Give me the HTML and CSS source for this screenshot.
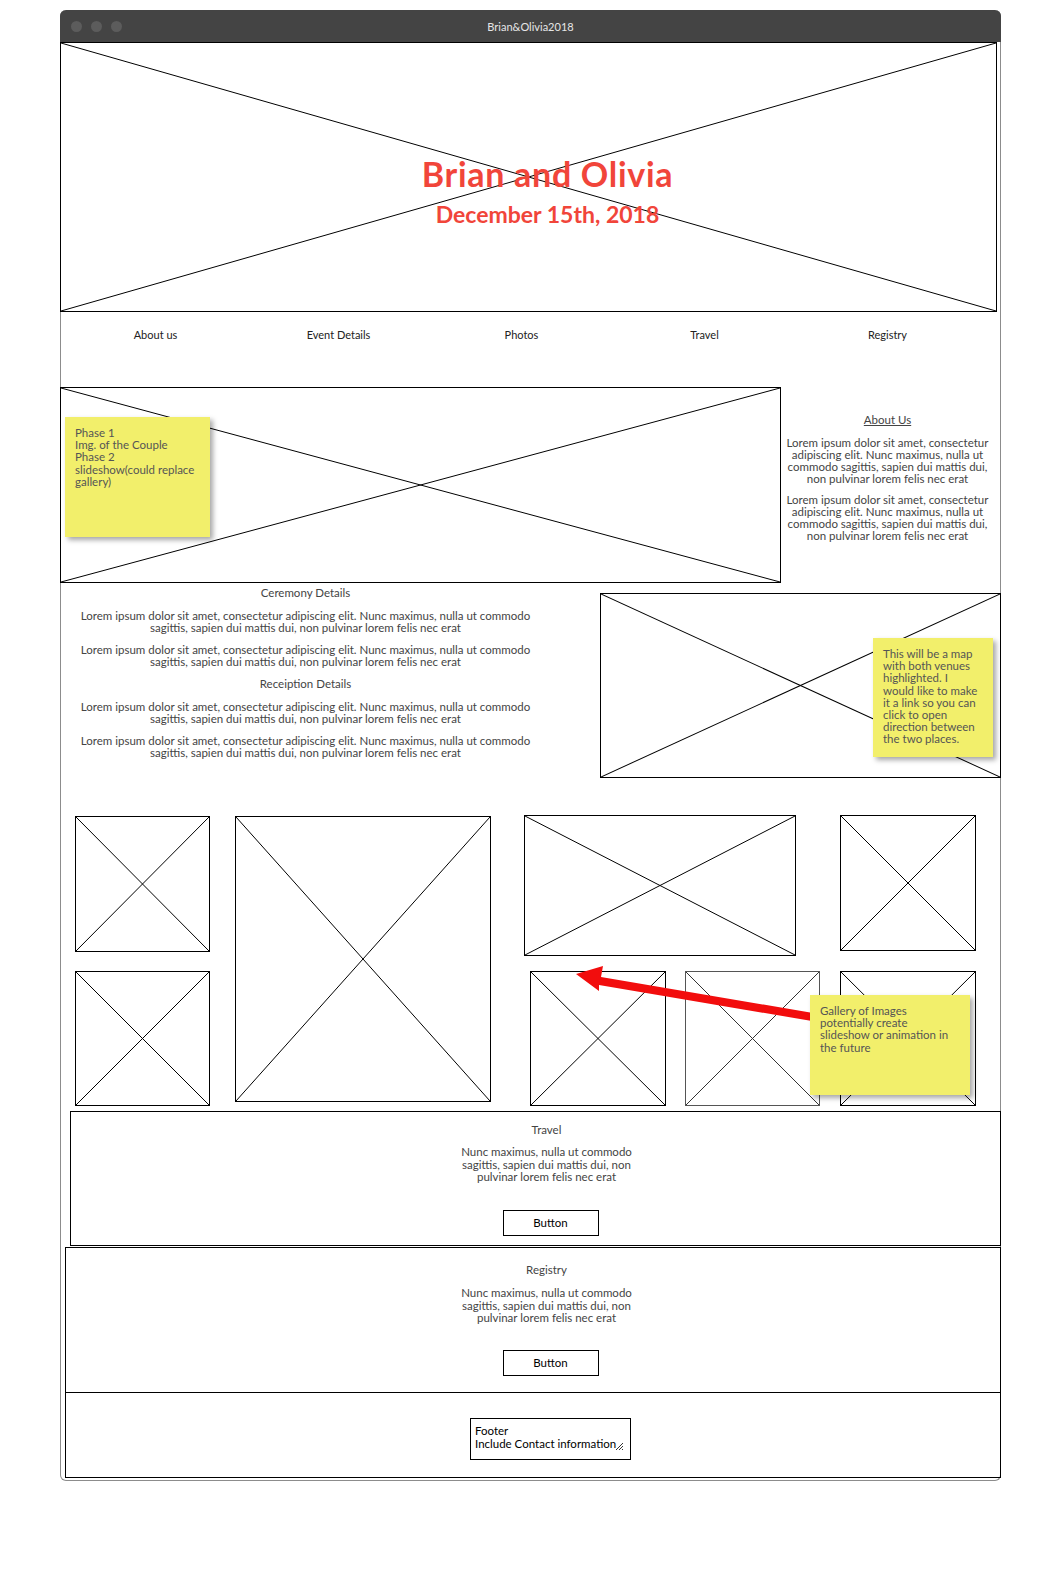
FILE: index.html
```html
<!DOCTYPE html>
<html lang="en">
<head>
    <meta charset="UTF-8">
    <title>Brian&amp;Olivia2018</title>
    <link rel="stylesheet" href="styles.css">
</head>
<body>
    <div class="window">
        <div class="titlebar">
            <div class="dots"><span></span><span></span><span></span></div>
            <div class="title">Brian&amp;Olivia2018</div>
            <div></div>
        </div>

        <div class="page">
            <header class="hero ph">
                <svg class="x" viewBox="0 0 100 100" preserveAspectRatio="none"><line x1="0" y1="0" x2="100" y2="100"/><line x1="0" y1="100" x2="100" y2="0"/></svg>
                <h1>Brian and Olivia</h1>
                <p class="date">December 15th, 2018</p>
            </header>

            <nav class="nav">
                <a>About us</a>
                <a>Event Details</a>
                <a>Photos</a>
                <a>Travel</a>
                <a>Registry</a>
            </nav>

            <section class="about">
                <div class="ph couple">
                    <svg class="x" viewBox="0 0 100 100" preserveAspectRatio="none"><line x1="0" y1="0" x2="100" y2="100"/><line x1="0" y1="100" x2="100" y2="0"/></svg>
                    <div class="note note-couple">Phase 1<br>Img. of the Couple<br>Phase 2<br>slideshow(could replace<br>gallery)</div>
                </div>
                <div class="about-text">
                    <h2 class="underline">About Us</h2>
                    <p>Lorem ipsum dolor sit amet, consectetur adipiscing elit. Nunc maximus, nulla ut commodo sagittis, sapien dui mattis dui, non pulvinar lorem felis nec erat</p>
                    <p>Lorem ipsum dolor sit amet, consectetur adipiscing elit. Nunc maximus, nulla ut commodo sagittis, sapien dui mattis dui, non pulvinar lorem felis nec erat</p>
                </div>
            </section>

            <section class="event">
                <div class="event-text">
                    <h2>Ceremony Details</h2>
                    <p>Lorem ipsum dolor sit amet, consectetur adipiscing elit. Nunc maximus, nulla ut commodo sagittis, sapien dui mattis dui, non pulvinar lorem felis nec erat</p>
                    <p>Lorem ipsum dolor sit amet, consectetur adipiscing elit. Nunc maximus, nulla ut commodo sagittis, sapien dui mattis dui, non pulvinar lorem felis nec erat</p>
                    <h2>Receiption Details</h2>
                    <p>Lorem ipsum dolor sit amet, consectetur adipiscing elit. Nunc maximus, nulla ut commodo sagittis, sapien dui mattis dui, non pulvinar lorem felis nec erat</p>
                    <p>Lorem ipsum dolor sit amet, consectetur adipiscing elit. Nunc maximus, nulla ut commodo sagittis, sapien dui mattis dui, non pulvinar lorem felis nec erat</p>
                </div>
                <div class="ph map">
                    <svg class="x" viewBox="0 0 100 100" preserveAspectRatio="none"><line x1="0" y1="0" x2="100" y2="100"/><line x1="0" y1="100" x2="100" y2="0"/></svg>
                    <div class="note note-map">This will be a map<br>with both venues<br>highlighted. I<br>would like to make<br>it a link so you can<br>click to open<br>direction between<br>the two places.</div>
                </div>
            </section>

            <section class="gallery">
                <div class="col col-a">
                    <div class="ph img1"><svg class="x" viewBox="0 0 100 100" preserveAspectRatio="none"><line x1="0" y1="0" x2="100" y2="100"/><line x1="0" y1="100" x2="100" y2="0"/></svg></div>
                    <div class="ph img5"><svg class="x" viewBox="0 0 100 100" preserveAspectRatio="none"><line x1="0" y1="0" x2="100" y2="100"/><line x1="0" y1="100" x2="100" y2="0"/></svg></div>
                </div>
                <div class="col col-b">
                    <div class="ph img2"><svg class="x" viewBox="0 0 100 100" preserveAspectRatio="none"><line x1="0" y1="0" x2="100" y2="100"/><line x1="0" y1="100" x2="100" y2="0"/></svg></div>
                </div>
                <div class="col col-c">
                    <div class="ph img3"><svg class="x" viewBox="0 0 100 100" preserveAspectRatio="none"><line x1="0" y1="0" x2="100" y2="100"/><line x1="0" y1="100" x2="100" y2="0"/></svg></div>
                    <div class="pair">
                        <div class="ph img6"><svg class="x" viewBox="0 0 100 100" preserveAspectRatio="none"><line x1="0" y1="0" x2="100" y2="100"/><line x1="0" y1="100" x2="100" y2="0"/></svg></div>
                        <div class="ph img7 faint"><svg class="x" viewBox="0 0 100 100" preserveAspectRatio="none"><line x1="0" y1="0" x2="100" y2="100"/><line x1="0" y1="100" x2="100" y2="0"/></svg></div>
                    </div>
                </div>
                <div class="col col-d">
                    <div class="ph img4"><svg class="x" viewBox="0 0 100 100" preserveAspectRatio="none"><line x1="0" y1="0" x2="100" y2="100"/><line x1="0" y1="100" x2="100" y2="0"/></svg></div>
                    <div class="ph img8"><svg class="x" viewBox="0 0 100 100" preserveAspectRatio="none"><line x1="0" y1="0" x2="100" y2="100"/><line x1="0" y1="100" x2="100" y2="0"/></svg></div>
                </div>

                <svg class="arrow" width="760" height="220" viewBox="0 0 760 220">
                    <polygon points="515,159 542,151 540,162 752,198 751,206 538,170 538,176"/>
                </svg>
                <div class="note note-gallery">Gallery of Images<br>potentially create<br>slideshow or animation in<br>the future</div>
            </section>

            <section class="box travel">
                <h2>Travel</h2>
                <p>Nunc maximus, nulla ut commodo sagittis, sapien dui mattis dui, non pulvinar lorem felis nec erat</p>
                <button class="button">Button</button>
            </section>

            <section class="box registry">
                <h2>Registry</h2>
                <p>Nunc maximus, nulla ut commodo sagittis, sapien dui mattis dui, non pulvinar lorem felis nec erat</p>
                <button class="button">Button</button>
            </section>

            <footer class="footer">
                <div class="footer-box">
                    Footer<br>Include Contact information
                    <svg class="grip" width="9" height="9" viewBox="0 0 9 9"><line x1="1" y1="8" x2="8" y2="1"/><line x1="4" y1="8" x2="8" y2="4"/><line x1="7" y1="8" x2="8" y2="7"/></svg>
                </div>
            </footer>
        </div>
    </div>
</body>
</html>
```

FILE: styles.css
```css
body {
    margin: 0;
    background: #ffffff;
    font-family: Lato, "Open Sans", sans-serif;
    font-size: 11.5px;
    color: #444444;
}

.window {
    margin: 10px 0 0 60px;
    width: 939px;
    border: 1px solid #8c8c8c;
    border-top: none;
    border-radius: 6px;
    padding-bottom: 1px;
}

.titlebar {
    display: grid;
    grid-template-columns: 1fr auto 1fr;
    align-items: center;
    height: 32px;
    margin: 0 -1px;
    background: #444444;
    border-radius: 6px 6px 0 0;
    color: #e6e6e6;
}

.dots {
    display: flex;
    gap: 9px;
    padding-left: 11px;
}

.dots span {
    width: 11px;
    height: 11px;
    border-radius: 50%;
    background: #5c5c5c;
}

.title {
    font-size: 11px;
}

.page {
    position: relative;
}

/* placeholder image: box with a cross */
.ph {
    position: relative;
    box-sizing: border-box;
    border: 1px solid #000000;
}

.ph .x {
    position: absolute;
    top: 0;
    left: 0;
    width: 100%;
    height: 100%;
    z-index: 0;
}

.ph .x line {
    stroke: #000000;
    stroke-width: 1;
    vector-effect: non-scaling-stroke;
}

.faint {
    border-color: #555555;
}

.faint .x line {
    stroke: #333333;
}

.hero {
    height: 270px;
    width: 937px;
    margin-left: -1px;
    padding: 111px 0 0 38px;
    text-align: center;
}

.hero h1 {
    position: relative;
    margin: 0;
    font-size: 34px;
    line-height: 1.2;
    font-weight: 700;
    letter-spacing: 0.7px;
    color: #f1453a;
}

.hero .date {
    position: relative;
    margin: 6px 0 0;
    font-size: 23px;
    line-height: 1.2;
    font-weight: 700;
    color: #f1453a;
}

.nav {
    display: grid;
    grid-template-columns: repeat(5, 183px);
    height: 75px;
    box-sizing: border-box;
    padding: 17px 0 0 3px;
    font-size: 11px;
    color: #222222;
}

.nav a {
    text-align: center;
    line-height: 12px;
}

h2 {
    margin: 0;
    font-size: 11.5px;
    font-weight: 400;
    line-height: 12px;
    color: #444444;
}

p {
    margin: 0;
    line-height: 12px;
}

.about {
    display: flex;
}

.couple {
    width: 721px;
    height: 196px;
    margin-left: -1px;
}

.note {
    position: absolute;
    box-sizing: border-box;
    background: #f2ef6b;
    color: #555555;
    font-size: 11.5px;
    line-height: 12.2px;
    padding: 10px 10px 0 11px;
    box-shadow: 3px 3px 5px rgba(0, 0, 0, 0.35);
    z-index: 2;
}

.note-couple {
    left: 4px;
    top: 29px;
    width: 145px;
    height: 120px;
    padding-left: 10px;
}

.about-text {
    flex: 1;
    text-align: center;
    padding: 27px 6px 0 0;
}

.about-text h2 {
    text-decoration: underline;
    margin-bottom: 11px;
}

.about-text p {
    margin-bottom: 9px;
}

.event {
    display: flex;
    align-items: flex-start;
}

.event-text {
    width: 489px;
    padding-top: 4px;
    text-align: center;
}

.event-text h2 {
    margin-bottom: 11px;
}

.event-text p {
    width: 470px;
    margin: 0 auto 10px;
}

.map {
    width: 401px;
    height: 185px;
    margin: 10px -1px 0 auto;
}

.note-map {
    left: 272px;
    top: 44px;
    width: 120px;
    height: 119px;
    padding-left: 10px;
}

.gallery {
    position: relative;
    display: flex;
    align-items: flex-start;
    margin-top: 37px;
    padding-left: 14px;
}

.col {
    display: flex;
    flex-direction: column;
}

.col-a {
    width: 135px;
    margin-top: 1px;
    gap: 19px;
}

.img1 { width: 135px; height: 136px; }
.img5 { width: 135px; height: 135px; }

.col-b {
    margin: 1px 0 0 25px;
}

.img2 { width: 256px; height: 286px; }

.col-c {
    margin-left: 33px;
    width: 296px;
    gap: 15px;
}

.img3 { width: 272px; height: 141px; }

.pair {
    display: flex;
    gap: 19px;
    padding-left: 6px;
}

.img6 { width: 136px; height: 135px; }
.img7 { width: 135px; height: 135px; }

.col-d {
    margin-left: 20px;
    gap: 20px;
}

.img4 { width: 136px; height: 136px; }
.img8 { width: 136px; height: 135px; }

.arrow {
    position: absolute;
    left: 0;
    top: 0;
    z-index: 1;
}

.arrow polygon {
    fill: #f20d0d;
}

.note-gallery {
    left: 749px;
    top: 180px;
    width: 160px;
    height: 100px;
    padding-left: 10px;
}

.box {
    box-sizing: border-box;
    border: 1px solid #000000;
    text-align: center;
}

.box p {
    width: 180px;
    margin: 10px auto 0;
    line-height: 12.5px;
}

.box h2 {
    line-height: 12px;
}

.travel {
    height: 135px;
    margin: 5px -1px 0 9px;
    padding: 12px 0 0 22px;
}

.travel .button {
    margin-top: 26px;
}

.registry {
    height: 146px;
    margin: 1px -1px 0 4px;
    padding: 16px 0 0 27px;
}

.registry p {
    margin-top: 11px;
}

.registry .button {
    margin-top: 25px;
}

.button {
    display: inline-block;
    width: 96px;
    height: 26px;
    margin-left: 8px;
    padding: 0;
    background: #ffffff;
    border: 1px solid #000000;
    font-family: inherit;
    font-size: 11.5px;
    color: #000000;
}

.footer {
    box-sizing: border-box;
    height: 85px;
    margin: 0 -1px 1px 4px;
    border: 1px solid #000000;
    border-top: none;
    padding: 25px 0 0 35px;
    text-align: center;
}

.footer-box {
    position: relative;
    display: inline-block;
    box-sizing: border-box;
    width: 161px;
    height: 42px;
    padding: 5px 0 0 4px;
    border: 1px solid #000000;
    text-align: left;
    color: #000000;
    font-size: 11.5px;
    line-height: 13px;
}

.grip {
    position: absolute;
    right: 6px;
    bottom: 8px;
}

.grip line {
    stroke: #000000;
    stroke-width: 0.8;
}
```
